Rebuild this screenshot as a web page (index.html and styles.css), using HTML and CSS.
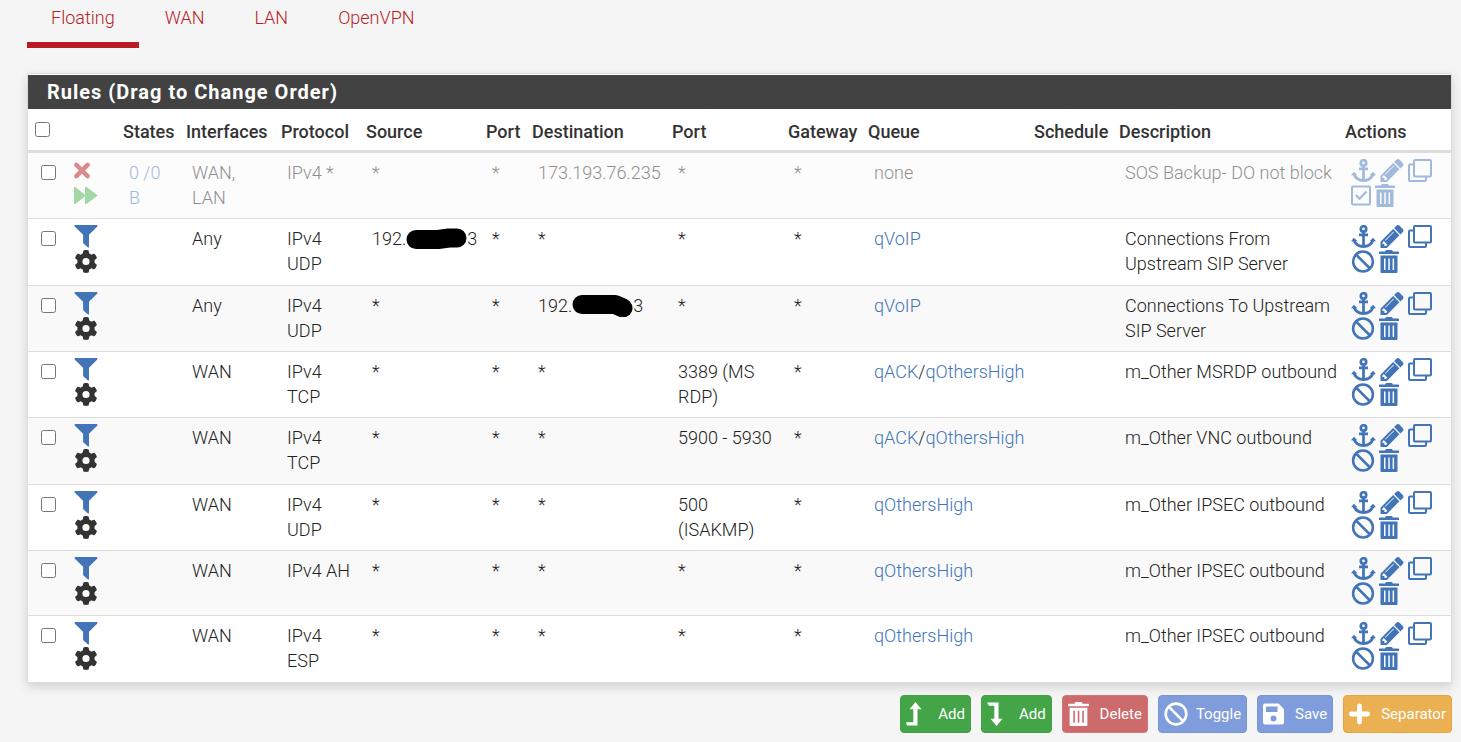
FILE: index.html
```
<!DOCTYPE html>
<html lang="en">
<head>
<meta charset="utf-8">
<title>Firewall Rules: Floating</title>
<link rel="stylesheet" href="styles.css">
</head>
<body>
<svg class="sprite" aria-hidden="true">
  <symbol id="i-times" viewBox="0 0 16 16"><path d="M2.4 2.4l11.2 11.2M13.6 2.4L2.4 13.6" fill="none" stroke="currentColor" stroke-width="4.400" stroke-linecap="round"/></symbol>
  <symbol id="i-forward" viewBox="0 0 24 18"><path d="M0 1.2Q0-.4 1.4.6L11 8.2V1.2Q11-.4 12.400.6L23 8.200Q24 9 23 9.800L12.400 17.400Q11 18.400 11 16.800V9.800L1.400 17.400Q0 18.400 0 16.800z" fill="currentColor"/></symbol>
  <symbol id="i-filter" viewBox="0 0 23 23"><path d="M.4 0h22.200q.8.9 0 1.800L14.500 9.700V22q-.3.800-1 .400L9 18.500q-.4-.4-.4-1V9.700L.4 1.800Q-.4.900.4 0z" fill="currentColor"/></symbol>
  <symbol id="i-cog" viewBox="0 0 512 512"><path fill="currentColor" d="M495.900 166.600c3.200 8.700 .5 18.400-6.400 24.600l-43.300 39.400c1.100 8.300 1.700 16.800 1.700 25.400s-.6 17.100-1.700 25.400l43.300 39.400c6.900 6.200 9.600 15.900 6.400 24.600c-4.400 11.900-9.700 23.300-15.800 34.300l-4.700 8.100c-6.600 11-14 21.400-22.100 31.200c-5.900 7.200-15.700 9.600-24.500 6.800l-55.700-17.700c-13.400 10.300-28.200 18.900-44 25.400l-12.500 57.100c-2 9.100-9 16.300-18.200 17.800c-13.800 2.300-28 3.500-42.500 3.500s-28.700-1.200-42.500-3.500c-9.200-1.500-16.200-8.700-18.200-17.800l-12.500-57.100c-15.800-6.500-30.600-15.100-44-25.400L83.100 425.900c-8.800 2.800-18.600 .3-24.500-6.800c-8.100-9.800-15.500-20.200-22.100-31.200l-4.700-8.100c-6.100-11-11.400-22.400-15.800-34.300c-3.200-8.700-.5-18.400 6.400-24.600l43.300-39.400C64.600 273.100 64 264.600 64 256s.6-17.100 1.700-25.400L22.400 191.200c-6.900-6.200-9.600-15.900-6.400-24.600c4.400-11.900 9.700-23.300 15.800-34.300l4.700-8.100c6.600-11 14-21.400 22.100-31.200c5.900-7.200 15.700-9.600 24.500-6.800l55.700 17.700c13.400-10.300 28.200-18.900 44-25.400l12.500-57.100c2-9.100 9-16.300 18.200-17.800C227.300 1.200 241.500 0 256 0s28.700 1.200 42.500 3.500c9.200 1.500 16.200 8.700 18.200 17.800l12.500 57.100c15.800 6.500 30.600 15.100 44 25.400l55.700-17.700c8.800-2.800 18.600-.3 24.500 6.800c8.100 9.800 15.500 20.200 22.100 31.200l4.700 8.100c6.100 11 11.400 22.400 15.800 34.300zM256 336a80 80 0 1 0 0-160 80 80 0 1 0 0 160z"/></symbol>
  <symbol id="i-anchor" viewBox="0 0 25 23"><g fill="none" stroke="currentColor" stroke-width="2.700"><circle cx="12.500" cy="3.900" r="2.700"/><path d="M12.500 6.500V21.500M8 9.800h9"/><path d="M3 15.500Q5.500 21.400 12.500 21.500Q19.500 21.400 22 15.500" stroke-width="2.900"/></g><path d="M0 16.300L2.900 12.700 6.400 16.300zM25 16.300L22.100 12.700 18.600 16.300z" fill="currentColor"/></symbol>
  <symbol id="i-pencil" viewBox="128 149 1515 1515"><path fill="currentColor" d="M491 1536l91-91-235-235-91 91v107h128v128h107zM1014 608q0-22-22-22-10 0-17 7l-542 542q-7 7-7 17 0 22 22 22 10 0 17-7l542-542q7-7 7-17zM960 416l416 416-832 832H128v-416zM1643 512q0 53-37 90l-166 166-416-416 166-165q36-38 90-38 53 0 91 38l235 234q37 39 37 91z"/></symbol>
  <symbol id="i-clone" viewBox="0 0 24 23"><g fill="none" stroke="currentColor" stroke-width="2"><rect x="6" y="1" width="17" height="16.500" rx="1"/><path d="M5.500 5.500H2q-1 0-1 1V21q0 1 1 1H17q1 0 1-1v-3.500"/></g></symbol>
  <symbol id="i-ban" viewBox="0 0 23 23"><g fill="none" stroke="currentColor" stroke-width="2.500"><circle cx="11.500" cy="11.500" r="9.900"/><path d="M4.500 4.500l14 14"/></g></symbol>
  <symbol id="i-trash" viewBox="0 0 20 23"><path fill="currentColor" fill-rule="evenodd" d="M6.500.7Q6.700 0 7.500 0h5q.8 0 1 .7l.3.900H19.500q.5 0 .5.500V3.500q0 .5-.5.500H.5Q0 4 0 3.500V2.100q0-.5.5-.5H6.200zM1.500 5.500h17V22q0 1-1 1h-15q-1 0-1-1zM5 8.500v11.500h1.500V8.500zM9.300 8.500v11.500h1.500V8.500zM13.600 8.500v11.500h1.500V8.500z"/></symbol>
  <symbol id="i-check" viewBox="0 0 20 20"><rect x="1" y="1" width="18" height="18" rx="1" fill="none" stroke="currentColor" stroke-width="2"/><path d="M4.800 9.500l3.700 3.700L15.500 6" fill="none" stroke="currentColor" stroke-width="2.200"/></symbol>
  <symbol id="i-up" viewBox="0 0 16 24"><path fill="currentColor" d="M9.500 0l6 7.200h-4V23.500H1L0 20.300h7.300V7.200H3.500z"/></symbol>
  <symbol id="i-down" viewBox="0 0 16 24"><path fill="currentColor" d="M9.500 24l6-7.200h-4V.5H0L2 3.700h5.300v13.100H3.500z"/></symbol>
  <symbol id="i-save" viewBox="0 0 21 21"><path fill="currentColor" fill-rule="evenodd" d="M2 0h13.500L21 5.500V19q0 2-2 2H2q-2 0-2-2V2Q0 0 2 0zM3 3v5.500h11.500V3zM10.500 12a3 3 0 1 0 0 6 3 3 0 1 0 0-6z"/></symbol>
  <symbol id="i-plus" viewBox="0 0 22 22"><path d="M11 2.500v17M2.500 11h17" stroke="currentColor" stroke-width="5" stroke-linecap="round"/></symbol>
</svg>

<nav class="tabs">
  <a class="tab active" href="#floating">Floating</a>
  <a class="tab" href="#wan">WAN</a>
  <a class="tab" href="#lan">LAN</a>
  <a class="tab" href="#openvpn">OpenVPN</a>
</nav>

<section class="panel">
  <h2 class="panel-title">Rules (Drag to Change Order)</h2>
  <table class="rules">
    <colgroup>
      <col class="c-check"><col class="c-icons"><col class="c-states"><col class="c-if"><col class="c-proto"><col class="c-src"><col class="c-port"><col class="c-dst"><col class="c-dport"><col class="c-gw"><col class="c-queue"><col class="c-sched"><col><col class="c-actions">
    </colgroup>
    <thead>
      <tr>
        <th><input type="checkbox" aria-label="Select all rules"></th><th></th><th>States</th><th>Interfaces</th><th>Protocol</th><th>Source</th><th>Port</th><th>Destination</th><th>Port</th><th>Gateway</th><th>Queue</th><th>Schedule</th><th>Description</th><th>Actions</th>
      </tr>
    </thead>
    <tbody>
      <tr class="disabled">
        <td><input type="checkbox" aria-label="Select rule 1"></td>
        <td class="icons"><div class="stack"><svg class="times"><use href="#i-times"/></svg><svg class="forward"><use href="#i-forward"/></svg></div></td>
        <td><a href="#states">0 /0 B</a></td><td>WAN, LAN</td><td>IPv4 *</td><td>*</td><td>*</td><td>173.193.76.235</td><td>*</td><td>*</td><td>none</td><td></td><td class="desc">SOS Backup- DO not block</td>
        <td class="icons"><div class="acts"><a href="#move" aria-label="Move"><svg class="w25"><use href="#i-anchor"/></svg></a><a href="#edit" aria-label="Edit"><svg><use href="#i-pencil"/></svg></a><a href="#copy" aria-label="Copy"><svg class="w24"><use href="#i-clone"/></svg></a></div><div class="acts"><a href="#enable" aria-label="Enable"><svg class="w20"><use href="#i-check"/></svg></a><a href="#delete" aria-label="Delete"><svg class="w20"><use href="#i-trash"/></svg></a></div></td>
      </tr>
      <tr>
        <td><input type="checkbox" aria-label="Select rule 2"></td>
        <td class="icons"><div class="stack"><svg class="blue"><use href="#i-filter"/></svg><svg><use href="#i-cog"/></svg></div></td>
        <td></td><td>Any</td><td>IPv4 UDP</td><td class="nowrap">192.<svg class="redact" viewBox="0 0 61 22"><path d="M10 11.500H32L43 10H51" /></svg>3</td><td>*</td><td>*</td><td>*</td><td>*</td><td><a href="#q">qVoIP</a></td><td></td><td class="desc">Connections From Upstream SIP Server</td>
        <td class="icons"><div class="acts"><a href="#move" aria-label="Move"><svg class="w25"><use href="#i-anchor"/></svg></a><a href="#edit" aria-label="Edit"><svg><use href="#i-pencil"/></svg></a><a href="#copy" aria-label="Copy"><svg class="w24"><use href="#i-clone"/></svg></a></div><div class="acts"><a href="#disable" aria-label="Disable"><svg><use href="#i-ban"/></svg></a><a href="#delete" aria-label="Delete"><svg class="w20"><use href="#i-trash"/></svg></a></div></td>
      </tr>
      <tr>
        <td><input type="checkbox" aria-label="Select rule 3"></td>
        <td class="icons"><div class="stack"><svg class="blue"><use href="#i-filter"/></svg><svg><use href="#i-cog"/></svg></div></td>
        <td></td><td>Any</td><td>IPv4 UDP</td><td>*</td><td>*</td><td class="nowrap">192.<svg class="redact" viewBox="0 0 61 22"><path d="M10 9.500H43L51 13" /></svg>3</td><td>*</td><td>*</td><td><a href="#q">qVoIP</a></td><td></td><td class="desc">Connections To Upstream SIP Server</td>
        <td class="icons"><div class="acts"><a href="#move" aria-label="Move"><svg class="w25"><use href="#i-anchor"/></svg></a><a href="#edit" aria-label="Edit"><svg><use href="#i-pencil"/></svg></a><a href="#copy" aria-label="Copy"><svg class="w24"><use href="#i-clone"/></svg></a></div><div class="acts"><a href="#disable" aria-label="Disable"><svg><use href="#i-ban"/></svg></a><a href="#delete" aria-label="Delete"><svg class="w20"><use href="#i-trash"/></svg></a></div></td>
      </tr>
      <tr>
        <td><input type="checkbox" aria-label="Select rule 4"></td>
        <td class="icons"><div class="stack"><svg class="blue"><use href="#i-filter"/></svg><svg><use href="#i-cog"/></svg></div></td>
        <td></td><td>WAN</td><td>IPv4 TCP</td><td>*</td><td>*</td><td>*</td><td>3389 (MS RDP)</td><td>*</td><td><a href="#q">qACK</a>/<a href="#q">qOthersHigh</a></td><td></td><td class="desc">m_Other MSRDP outbound</td>
        <td class="icons"><div class="acts"><a href="#move" aria-label="Move"><svg class="w25"><use href="#i-anchor"/></svg></a><a href="#edit" aria-label="Edit"><svg><use href="#i-pencil"/></svg></a><a href="#copy" aria-label="Copy"><svg class="w24"><use href="#i-clone"/></svg></a></div><div class="acts"><a href="#disable" aria-label="Disable"><svg><use href="#i-ban"/></svg></a><a href="#delete" aria-label="Delete"><svg class="w20"><use href="#i-trash"/></svg></a></div></td>
      </tr>
      <tr>
        <td><input type="checkbox" aria-label="Select rule 5"></td>
        <td class="icons"><div class="stack"><svg class="blue"><use href="#i-filter"/></svg><svg><use href="#i-cog"/></svg></div></td>
        <td></td><td>WAN</td><td>IPv4 TCP</td><td>*</td><td>*</td><td>*</td><td>5900 - 5930</td><td>*</td><td><a href="#q">qACK</a>/<a href="#q">qOthersHigh</a></td><td></td><td class="desc">m_Other VNC outbound</td>
        <td class="icons"><div class="acts"><a href="#move" aria-label="Move"><svg class="w25"><use href="#i-anchor"/></svg></a><a href="#edit" aria-label="Edit"><svg><use href="#i-pencil"/></svg></a><a href="#copy" aria-label="Copy"><svg class="w24"><use href="#i-clone"/></svg></a></div><div class="acts"><a href="#disable" aria-label="Disable"><svg><use href="#i-ban"/></svg></a><a href="#delete" aria-label="Delete"><svg class="w20"><use href="#i-trash"/></svg></a></div></td>
      </tr>
      <tr>
        <td><input type="checkbox" aria-label="Select rule 6"></td>
        <td class="icons"><div class="stack"><svg class="blue"><use href="#i-filter"/></svg><svg><use href="#i-cog"/></svg></div></td>
        <td></td><td>WAN</td><td>IPv4 UDP</td><td>*</td><td>*</td><td>*</td><td>500 (ISAKMP)</td><td>*</td><td><a href="#q">qOthersHigh</a></td><td></td><td class="desc">m_Other IPSEC outbound</td>
        <td class="icons"><div class="acts"><a href="#move" aria-label="Move"><svg class="w25"><use href="#i-anchor"/></svg></a><a href="#edit" aria-label="Edit"><svg><use href="#i-pencil"/></svg></a><a href="#copy" aria-label="Copy"><svg class="w24"><use href="#i-clone"/></svg></a></div><div class="acts"><a href="#disable" aria-label="Disable"><svg><use href="#i-ban"/></svg></a><a href="#delete" aria-label="Delete"><svg class="w20"><use href="#i-trash"/></svg></a></div></td>
      </tr>
      <tr>
        <td><input type="checkbox" aria-label="Select rule 7"></td>
        <td class="icons"><div class="stack"><svg class="blue"><use href="#i-filter"/></svg><svg><use href="#i-cog"/></svg></div></td>
        <td></td><td>WAN</td><td class="nowrap">IPv4 AH</td><td>*</td><td>*</td><td>*</td><td>*</td><td>*</td><td><a href="#q">qOthersHigh</a></td><td></td><td class="desc">m_Other IPSEC outbound</td>
        <td class="icons"><div class="acts"><a href="#move" aria-label="Move"><svg class="w25"><use href="#i-anchor"/></svg></a><a href="#edit" aria-label="Edit"><svg><use href="#i-pencil"/></svg></a><a href="#copy" aria-label="Copy"><svg class="w24"><use href="#i-clone"/></svg></a></div><div class="acts"><a href="#disable" aria-label="Disable"><svg><use href="#i-ban"/></svg></a><a href="#delete" aria-label="Delete"><svg class="w20"><use href="#i-trash"/></svg></a></div></td>
      </tr>
      <tr>
        <td><input type="checkbox" aria-label="Select rule 8"></td>
        <td class="icons"><div class="stack"><svg class="blue"><use href="#i-filter"/></svg><svg><use href="#i-cog"/></svg></div></td>
        <td></td><td>WAN</td><td>IPv4 ESP</td><td>*</td><td>*</td><td>*</td><td>*</td><td>*</td><td><a href="#q">qOthersHigh</a></td><td></td><td class="desc">m_Other IPSEC outbound</td>
        <td class="icons"><div class="acts"><a href="#move" aria-label="Move"><svg class="w25"><use href="#i-anchor"/></svg></a><a href="#edit" aria-label="Edit"><svg><use href="#i-pencil"/></svg></a><a href="#copy" aria-label="Copy"><svg class="w24"><use href="#i-clone"/></svg></a></div><div class="acts"><a href="#disable" aria-label="Disable"><svg><use href="#i-ban"/></svg></a><a href="#delete" aria-label="Delete"><svg class="w20"><use href="#i-trash"/></svg></a></div></td>
      </tr>
    </tbody>
  </table>
</section>

<div class="buttons">
  <button class="btn success" type="button"><svg class="w16"><use href="#i-up"/></svg>Add</button>
  <button class="btn success" type="button"><svg class="w16"><use href="#i-down"/></svg>Add</button>
  <button class="btn danger" type="button"><svg class="w21"><use href="#i-trash"/></svg>Delete</button>
  <button class="btn primary" type="button"><svg class="w24"><use href="#i-ban"/></svg>Toggle</button>
  <button class="btn primary" type="button"><svg class="w21"><use href="#i-save"/></svg>Save</button>
  <button class="btn warning" type="button"><svg class="w21"><use href="#i-plus"/></svg>Separator</button>
</div>
</body>
</html>
```
FILE: styles.css
```
* { box-sizing: border-box; }

body {
  margin: 0;
  padding: 0 9px 0 27px;
  background: #f5f5f5;
  color: #222;
  font: 300 18px/25px Roboto, "Liberation Sans", sans-serif;
}

a { color: #4274b8; text-decoration: none; }
svg { display: block; }
.sprite { position: absolute; width: 0; height: 0; }

.tabs { display: flex; gap: 2px; margin-bottom: 25px; }
.tab {
  padding: 5px 24px 12px;
  border-bottom: 6px solid transparent;
  color: #b71c24;
}
.tab.active { border-bottom-color: #b71c24; }

.panel {
  padding-top: 1px;
  border: 1px solid #ddd;
  background: #fff;
  box-shadow: 0 4px 10px rgba(0, 0, 0, .15);
}
.panel-title {
  margin: 0;
  padding: 5px 19px 4px;
  background: #424242;
  color: #fff;
  font-size: 20px;
  font-weight: 700;
  line-height: 25px;
  letter-spacing: 1px;
}

.rules { width: 100%; table-layout: fixed; border-collapse: separate; border-spacing: 0; }
.c-check { width: 34px; }
.c-icons { width: 55px; }
.c-states { width: 63px; }
.c-if { width: 95px; }
.c-proto { width: 85px; }
.c-src { width: 120px; }
.c-port { width: 46px; }
.c-dst { width: 140px; }
.c-dport { width: 116px; }
.c-gw { width: 80px; }
.c-queue { width: 166px; }
.c-sched { width: 85px; }
.c-actions { width: 112px; }

th {
  padding: 10px 0 6px 6px;
  border-bottom: 3px solid #ddd;
  color: #333;
  text-align: left;
  font-weight: 500;
  white-space: nowrap;
}
td {
  padding: 7px 6px 8px 12px;
  border-top: 1px solid #ddd;
  vertical-align: top;
}
tbody tr:first-child td { border-top: 0; }
tbody tr:nth-child(odd) { background: #f9f9f9; }
tbody tr:first-child { background: #fcfcfc; }
tbody tr:nth-child(3n+2) td { padding-bottom: 9px; }
td.icons { padding-top: 6px; padding-right: 0; color: #333; }
td.nowrap { padding-right: 0; white-space: nowrap; }
td.desc { padding-right: 0; }

input[type="checkbox"] { display: block; width: 15px; height: 15px; margin: 5px 0 0 1px; }
th input[type="checkbox"] { margin: 0 0 4px 1px; }

.disabled { color: #909090; }
.disabled a { color: #a1b9db; }

.stack, .acts { display: flex; height: 25px; }
.stack { flex-direction: column; gap: 2px; height: 50px; }
.acts { gap: 4px; }
.stack svg, .acts svg { width: 24px; height: 23px; }
.acts svg.w25 { width: 25px; }
.acts svg.w20 { width: 20px; }
.stack .blue { color: #4274b8; }
.stack .times { width: 16px; color: #db8a8c; }
.stack .forward { color: #a3d7a5; }

.redact {
  display: inline-block;
  width: 61px;
  height: 22px;
  vertical-align: -5px;
  fill: none;
  stroke: #000;
  stroke-width: 19px;
  stroke-linecap: round;
  stroke-linejoin: round;
}

.buttons { display: flex; justify-content: flex-end; gap: 10px; padding: 12px 0 9px; }
.btn {
  display: flex;
  align-items: center;
  gap: 8px;
  height: 38px;
  padding: 0 5px;
  border: 1px solid;
  border-radius: 4px;
  color: #fff;
  font: inherit;
  font-size: 15px;
  font-weight: 400;
}
.btn svg { height: 24px; }
.btn svg.w16 { width: 16px; margin-right: 8px; }
.btn svg.w21 { width: 21px; margin-right: 3px; }
.btn svg.w24 { width: 24px; }
.success { border-color: #43a047; background: #43a547; }
.danger { border-color: #d47577; background: #cc6a6c; }
.primary { border-color: #7797cf; background: #7f9ddc; }
.warning { border-color: #eba43d; background: #ebb052; }
```
